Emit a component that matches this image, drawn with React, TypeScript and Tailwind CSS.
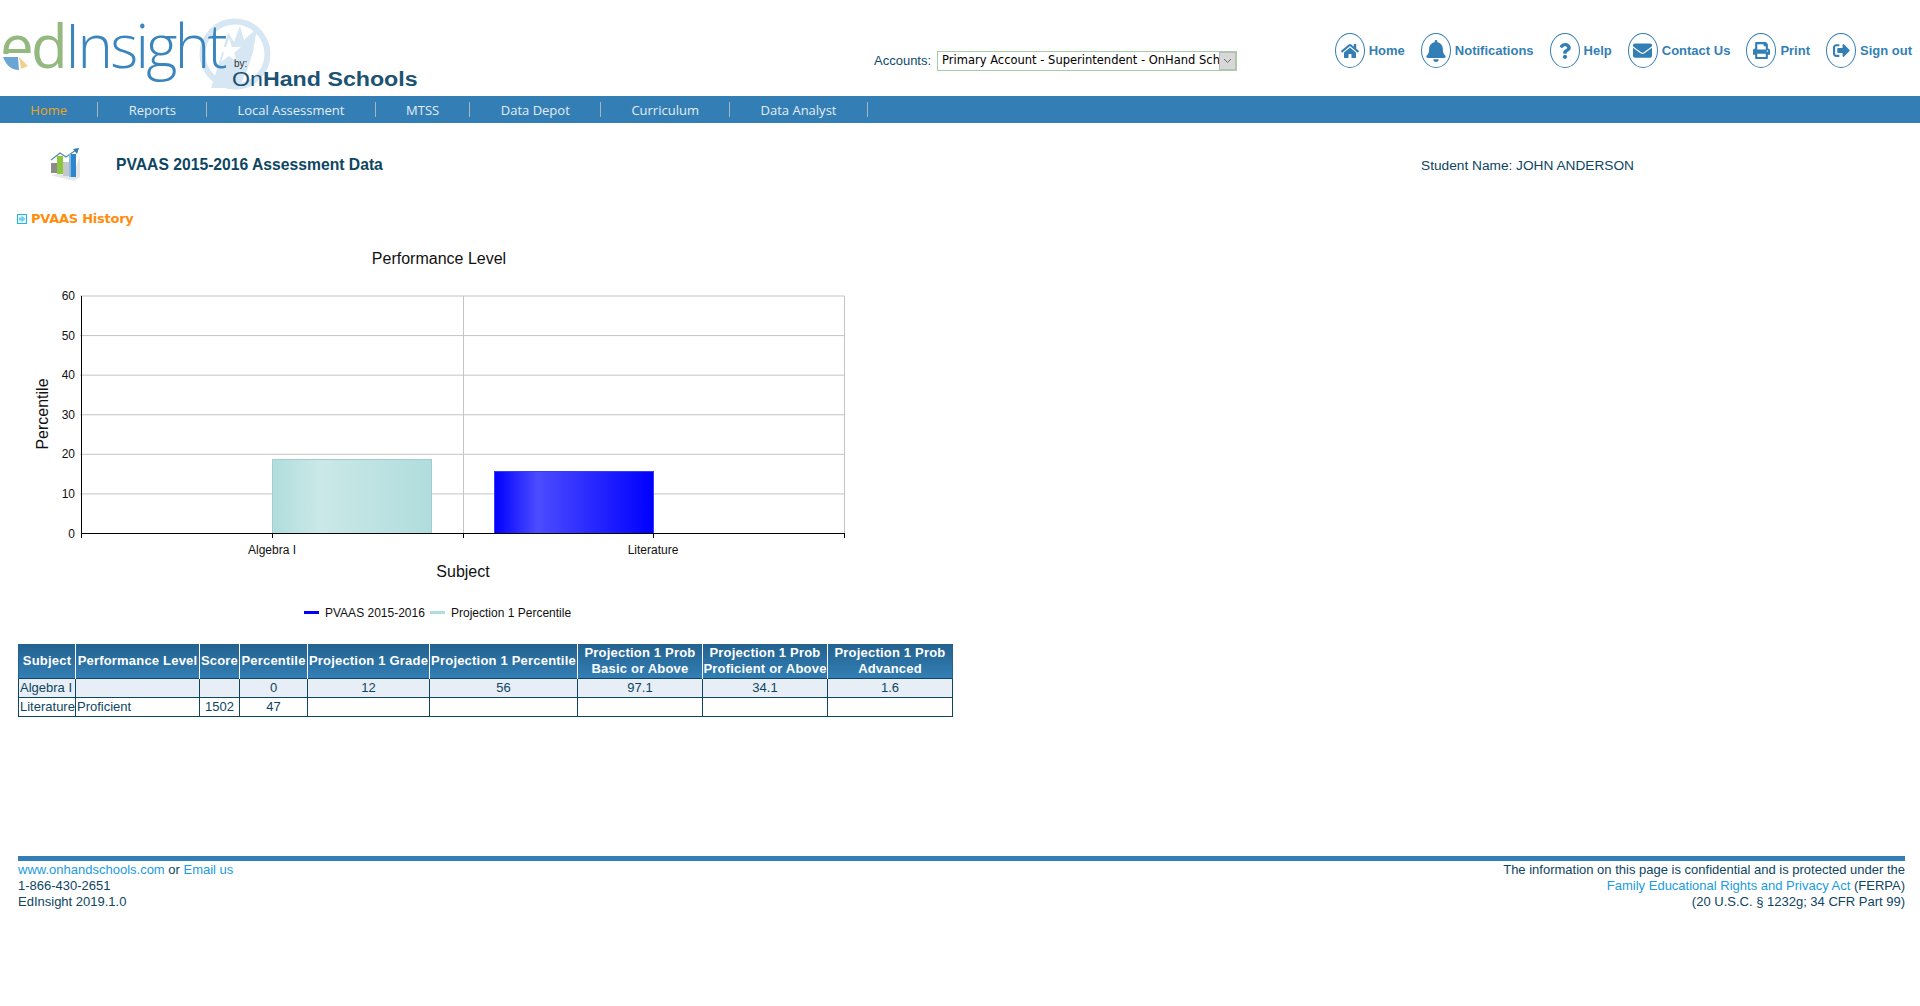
import React from "react";
import { FaHome, FaBell, FaQuestion, FaEnvelope, FaPrint, FaSignOutAlt } from "react-icons/fa";

const topLinks = [
  { label: "Home", icon: FaHome, size: "w-[18px] h-[18px]" },
  { label: "Notifications", icon: FaBell, size: "w-[20px] h-[22px]" },
  { label: "Help", icon: FaQuestion, size: "w-[14px] h-[16px]" },
  { label: "Contact Us", icon: FaEnvelope, size: "w-[19px] h-[19px]" },
  { label: "Print", icon: FaPrint, size: "w-[17px] h-[17px]" },
  { label: "Sign out", icon: FaSignOutAlt, size: "w-[17px] h-[17px]" },
];

const navItems = ["Home", "Reports", "Local Assessment", "MTSS", "Data Depot", "Curriculum", "Data Analyst"];

const columns = [
  { label: ["Subject"], width: "w-[57px]" },
  { label: ["Performance Level"], width: "w-[124px]" },
  { label: ["Score"], width: "w-[40px]" },
  { label: ["Percentile"], width: "w-[68px]" },
  { label: ["Projection 1 Grade"], width: "w-[122px]" },
  { label: ["Projection 1 Percentile"], width: "w-[148px]" },
  { label: ["Projection 1 Prob", "Basic or Above"], width: "w-[125px]" },
  { label: ["Projection 1 Prob", "Proficient or Above"], width: "w-[125px]" },
  { label: ["Projection 1 Prob", "Advanced"], width: "w-[125px]" },
];

const rows = [
  { subject: "Algebra I", level: "", cells: ["", "0", "12", "56", "97.1", "34.1", "1.6"], shaded: true },
  { subject: "Literature", level: "Proficient", cells: ["1502", "47", "", "", "", "", ""], shaded: false },
];

function Logo() {
  return (
    <div className="relative w-[430px] h-[96px] overflow-hidden">
      {/* watermark behind the wordmark */}
      <svg className="absolute left-[193px] top-[18px]" width="84" height="72" viewBox="0 0 84 72">
        <circle cx="42" cy="36" r="32.5" fill="none" stroke="#d6e6f3" strokeWidth="6" />
        <path d="M18 70 L29 35 L35 14 L41 24 L47 8 L51 22 L64 10 L60 34 L54 52 L46 70 Z" fill="#d6e6f3" />
        <path d="M36 20 L39 29 L48 29 L41 35 L44 44 L36 38 L28 44 L31 35 L24 29 L33 29 Z" fill="#ffffff" />
      </svg>
      <div className="absolute left-0 top-[10px] font-['Open_Sans',sans-serif] font-light text-[60px] leading-[70px] tracking-[-2.7px] whitespace-nowrap">
        <span className="text-[#94b97f] font-normal">ed</span>
        <span className="text-[#3a85bd]">Insight</span>
      </div>
      {/* pie wedges in the bottom of the e */}
      <svg className="absolute left-0 top-[54px]" width="33" height="18" viewBox="0 0 33 18">
        <rect x="0" y="0" width="33" height="18" fill="#ffffff" />
        <path d="M3 3 L18 3 L19 16 Q8 16 3 3 Z" fill="#6ba5d6" />
        <path d="M19 3 L28 12 L21 15 Z" fill="#f3cf8e" />
      </svg>
      <div className="absolute left-[234px] top-[58px] text-[10px] leading-[12px] text-[#333] font-['Liberation_Sans',sans-serif]">by:</div>
      <div className="absolute left-[232px] top-[66px] text-[20px] leading-[26px] text-[#1c5273] whitespace-nowrap font-['Liberation_Sans',sans-serif] scale-x-[1.16] origin-left">
        On<span className="font-bold">Hand Schools</span>
      </div>
    </div>
  );
}

function AccountSelect() {
  return (
    <div className="flex items-center ml-[444px] mt-[51px] h-[20px]">
      <span className="text-[13px] text-[#0d4a6b] font-['Liberation_Sans',sans-serif] mr-[6px]">Accounts:</span>
      <div className="w-[300px] h-[20px] border border-[#a3cfa3] flex items-center bg-white">
        <span className="flex-1 overflow-hidden whitespace-nowrap pl-[4px] text-[11.5px] text-black font-['DejaVu_Sans',sans-serif]">
          Primary Account - Superintendent - OnHand Schools
        </span>
        <span className="w-[17px] h-[18px] bg-[#d8d8d8] border border-[#bbb] flex items-center justify-center">
          <svg width="9" height="6" viewBox="0 0 9 6">
            <path d="M1 1 L4.5 4.5 L8 1" fill="none" stroke="#666" strokeWidth="1" />
          </svg>
        </span>
      </div>
    </div>
  );
}

function ChartIcon() {
  return (
    <svg width="34" height="34" viewBox="0 0 34 34">
      <path d="M2 27 L26 33 L32 29 L32 8 L26 24 Z" fill="#e4e6e8" />
      <path d="M3 12 L12 5 L18 9 L28 2" fill="none" stroke="#5a8aa8" strokeWidth="1.2" />
      <path d="M25 1 L31 0 L29 6 Z" fill="#2f7cb8" />
      <rect x="3" y="15" width="6" height="10" fill="#8b8b8b" />
      <rect x="9" y="8" width="6" height="18" fill="#8cc63f" />
      <rect x="15" y="14" width="6" height="14" fill="#c4c8cc" />
      <rect x="21" y="6" width="7" height="23" fill="#2f86cc" />
      <rect x="21" y="6" width="2" height="23" fill="#7fbde8" />
    </svg>
  );
}

function PerformanceChart() {
  const yTicks = [0, 10, 20, 30, 40, 50, 60];
  const yFor = (v: number) => 532.5 - (v / 60) * 237.5;
  return (
    <svg width="880" height="400" viewBox="0 240 880 400" className="block font-['Liberation_Sans',sans-serif]">
      <defs>
        <linearGradient id="tealBar" x1="0" x2="1" y1="0" y2="0">
          <stop offset="0" stopColor="#b0dddd" />
          <stop offset="0.3" stopColor="#cae8e7" />
          <stop offset="1" stopColor="#b0dddd" />
        </linearGradient>
        <linearGradient id="blueBar" x1="0" x2="1" y1="0" y2="0">
          <stop offset="0" stopColor="#0000ff" />
          <stop offset="0.27" stopColor="#4c4cff" />
          <stop offset="1" stopColor="#0000ff" />
        </linearGradient>
      </defs>
      <text x="439" y="263" fontSize="16" textAnchor="middle" fill="#111">Performance Level</text>
      {yTicks.slice(1).map((t) => (
        <line key={t} x1="80" x2="844.5" y1={yFor(t)} y2={yFor(t)} stroke="#c4c4c4" />
      ))}
      <line x1="463.5" x2="463.5" y1="295" y2="532" stroke="#c4c4c4" />
      <line x1="844.5" x2="844.5" y1="295" y2="532" stroke="#c4c4c4" />
      <rect x="272.5" y="458.5" width="159" height="74" fill="url(#tealBar)" stroke="#a3cccc" />
      <rect x="494.5" y="470.5" width="159" height="62" fill="url(#blueBar)" stroke="#3a3aff" />
      <line x1="81.5" x2="81.5" y1="295" y2="537" stroke="#000" />
      <line x1="81" x2="845" y1="532.5" y2="532.5" stroke="#000" />
      {yTicks.map((t) => (
        <text key={t} x="75" y={yFor(t) + 4} fontSize="12" textAnchor="end" fill="#111">{t}</text>
      ))}
      <line x1="272.5" x2="272.5" y1="532" y2="537" stroke="#000" />
      <line x1="463.5" x2="463.5" y1="532" y2="537" stroke="#000" />
      <line x1="653.5" x2="653.5" y1="532" y2="537" stroke="#000" />
      <line x1="844.5" x2="844.5" y1="532" y2="537" stroke="#000" />
      <text x="272" y="553" fontSize="12" textAnchor="middle" fill="#111">Algebra I</text>
      <text x="653" y="553" fontSize="12" textAnchor="middle" fill="#111">Literature</text>
      <text x="463" y="576" fontSize="16" textAnchor="middle" fill="#111">Subject</text>
      <text x="48" y="413" fontSize="16" textAnchor="middle" fill="#111" transform="rotate(-90 48 413)">Percentile</text>
      <rect x="304" y="610" width="15" height="3" fill="#0000ff" />
      <text x="325" y="616" fontSize="12" fill="#111">PVAAS 2015-2016</text>
      <rect x="430" y="610" width="15" height="3" fill="#b0dddd" />
      <text x="451" y="616" fontSize="12" fill="#111">Projection 1 Percentile</text>
    </svg>
  );
}

function AssessmentTable() {
  return (
    <table className="ml-[18px] mt-[3px] table-fixed border-collapse w-[935px] font-['Liberation_Sans',sans-serif] text-[13px] leading-[16px]">
      <thead>
        <tr className="h-[34px] bg-gradient-to-b from-[#23628f] to-[#337fb5]">
          {columns.map((c) => (
            <th key={c.label.join(" ")} className={`${c.width} p-0 text-center font-bold text-white tracking-[0.2px] whitespace-nowrap border-l border-r border-white first:border-l-[#23628f] last:border-r-[#23628f]`}>
              {c.label.map((line) => (
                <div key={line}>{line}</div>
              ))}
            </th>
          ))}
        </tr>
      </thead>
      <tbody className="text-[#0d4562]">
        {rows.map((r) => (
          <tr key={r.subject} className={`h-[19px] ${r.shaded ? "bg-[#e8eef5]" : "bg-white"}`}>
            <td className="p-0 pl-[1px] border border-[#0d4562] whitespace-nowrap">{r.subject}</td>
            <td className="p-0 pl-[1px] border border-[#0d4562] whitespace-nowrap">{r.level}</td>
            {r.cells.map((c, i) => (
              <td key={i} className="p-0 text-center border border-[#0d4562]">{c}</td>
            ))}
          </tr>
        ))}
      </tbody>
    </table>
  );
}

export default function App() {
  return (
    <div className="w-full h-[1006px] bg-white overflow-hidden font-['Liberation_Sans',sans-serif]">
      {/* Header */}
      <div className="flex h-[96px]">
        <Logo />
        <AccountSelect />
        <div className="flex ml-auto mt-[33px] mr-[8px] h-[35px] gap-[16px]">
          {topLinks.map((l) => {
            const Icon = l.icon;
            return (
              <div key={l.label} className="flex items-center">
                <span className="w-[30px] h-[35px] rounded-[50%] border border-[#337fb5] flex items-center justify-center text-[#337fb5] mr-[4px]">
                  <Icon className={l.size} />
                </span>
                <span className="text-[13px] font-bold text-[#337fb5] whitespace-nowrap">{l.label}</span>
              </div>
            );
          })}
        </div>
      </div>

      {/* Nav */}
      <div className="flex items-center h-[27px] bg-[#337fb5]">
        {navItems.map((item, i) => (
          <div
            key={item}
            className={`h-[15px] pt-[2px] flex items-center px-[30.3px] border-r border-[#a9b4b8] font-['Open_Sans',sans-serif] text-[13px] whitespace-nowrap ${i === 0 ? "text-[#eda41e]" : "text-[#e3edf5]"}`}
          >
            {item}
          </div>
        ))}
      </div>

      {/* Page title */}
      <div className="flex items-center h-[34px] mt-[25px]">
        <div className="ml-[48px] w-[68px]">
          <ChartIcon />
        </div>
        <h1 className="text-[15.7px] font-bold text-[#0d4562] whitespace-nowrap">PVAAS 2015-2016 Assessment Data</h1>
        <span className="ml-auto mr-[286px] mt-[2px] text-[13.7px] text-[#0d4562] whitespace-nowrap">Student Name: JOHN ANDERSON</span>
      </div>

      {/* Section heading */}
      <div className="flex items-center h-[20px] mt-[27px] mb-[12px] ml-[17px]">
        <svg width="10" height="10" viewBox="0 0 10 10" className="mr-[4px]">
          <rect x="0.5" y="0.5" width="9" height="9" fill="#eafaff" stroke="#1fb4ea" />
          <path d="M2 3.5 H4.5 V1.5 L8.5 5 L4.5 8.5 V6.5 H2 Z" fill="#6fd0f2" />
        </svg>
        <span className="text-[13px] tracking-[-0.25px] font-bold text-[#ff8c0a] font-['DejaVu_Sans',sans-serif] whitespace-nowrap">PVAAS History</span>
      </div>

      <PerformanceChart />
      <AssessmentTable />

      {/* Footer */}
      <div className="ml-[18px] mr-[15px] mt-[139px] border-t-[5px] border-[#337fb5] pt-[1px] flex justify-between text-[13px] leading-[16px] text-[#0d4562]">
        <div>
          <div>
            <span className="text-[#1a9be0]">www.onhandschools.com</span> or <span className="text-[#1a9be0]">Email us</span>
          </div>
          <div>1-866-430-2651</div>
          <div>EdInsight 2019.1.0</div>
        </div>
        <div className="text-right">
          <div>The information on this page is confidential and is protected under the</div>
          <div>
            <span className="text-[#1a9be0]">Family Educational Rights and Privacy Act</span> (FERPA)
          </div>
          <div>(20 U.S.C. § 1232g; 34 CFR Part 99)</div>
        </div>
      </div>
    </div>
  );
}
